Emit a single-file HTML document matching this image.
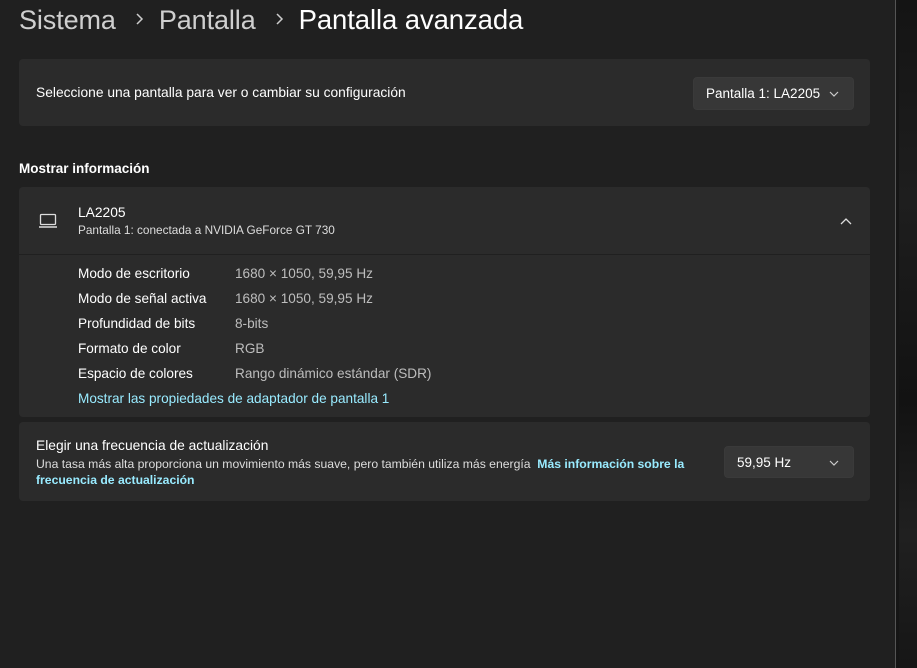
<!DOCTYPE html>
<html><head><meta charset="utf-8"><style>
*{margin:0;padding:0;box-sizing:border-box}
body{width:917px;height:668px;background:#202020;font-family:"Segoe UI","Liberation Sans",sans-serif;color:#fff;position:relative;overflow:hidden}
.side{position:absolute;left:895px;top:0;width:22px;height:668px;background:#151515;border-left:1px solid #555}
.side::after{content:"";position:absolute;left:3px;top:0;width:19px;height:668px;background:linear-gradient(180deg,#141414,#1e1e1e 30%,#121212 60%,#202020 80%,#161616)}
h1{position:absolute;left:19px;top:4px;font-size:27px;font-weight:normal;white-space:nowrap;letter-spacing:-0.1px}
h1 .g{color:#cfcfcf}
h1 .s{display:inline-block;width:10px;margin:0 15px 0 18px;position:relative;top:-3px}
.card{position:absolute;left:19px;width:851px;background:#2b2b2b;border-radius:4px}
.t{font-size:13.8px;color:#fff;position:absolute;white-space:nowrap}
.btn{position:absolute;background:#373737;border-radius:4px;font-size:13.5px;color:#fff;padding-left:12px;line-height:31px;border:1px solid #3a3a3a}
.btn svg{position:absolute;right:14px;top:13px}
.sec{position:absolute;left:19px;top:161px;font-size:13.5px;font-weight:bold}
.row{position:absolute;left:78px;font-size:13.6px;color:#fff;white-space:nowrap}
.row span{position:absolute;left:157px;color:#bdbdbd;white-space:nowrap}
.link{color:#99ebff}
</style></head><body>
<div class="side"></div>
<h1><span class="g">Sistema</span><span class="s"><svg width="10" height="14" viewBox="0 0 10 14"><path d="M3 2l5 5-5 5" fill="none" stroke="#ccc" stroke-width="1.5"/></svg></span><span class="g">Pantalla</span><span class="s"><svg width="10" height="14" viewBox="0 0 10 14"><path d="M3 2l5 5-5 5" fill="none" stroke="#ccc" stroke-width="1.5"/></svg></span><span style="font-size:27.5px">Pantalla avanzada</span></h1>

<div class="card" style="top:59px;height:67px">
  <div class="t" style="left:17px;top:26px">Seleccione una pantalla para ver o cambiar su configuración</div>
  <div class="btn" style="left:674px;top:18px;width:161px;height:33px">Pantalla 1: LA2205<svg width="10" height="6" viewBox="0 0 10 6"><path d="M1 1l4 4 4-4" fill="none" stroke="#ccc" stroke-width="1.2"/></svg></div>
</div>

<div class="sec">Mostrar información</div>

<div class="card" style="top:187px;height:67px;border-radius:4px 4px 0 0">
  <svg style="position:absolute;left:19px;top:26px" width="20" height="16" viewBox="0 0 20 16"><rect x="2.5" y="1.5" width="15" height="10" rx="1" fill="none" stroke="#ddd" stroke-width="1.3"/><line x1="1" y1="14" x2="19" y2="14" stroke="#ddd" stroke-width="1.5"/></svg>
  <div class="t" style="left:59px;top:18px">LA2205</div>
  <div class="t" style="left:59px;top:36px;font-size:11.8px;color:#ddd">Pantalla 1: conectada a NVIDIA GeForce GT 730</div>
  <svg style="position:absolute;left:821px;top:30px" width="12" height="8" viewBox="0 0 12 8"><path d="M1 7l5-5 5 5" fill="none" stroke="#ddd" stroke-width="1.3"/></svg>
</div>
<div class="card" style="top:255px;height:162px;border-radius:0 0 4px 4px"></div>
<div class="row" style="top:266px">Modo de escritorio<span>1680 × 1050, 59,95 Hz</span></div>
<div class="row" style="top:291px">Modo de señal activa<span>1680 × 1050, 59,95 Hz</span></div>
<div class="row" style="top:316px">Profundidad de bits<span>8-bits</span></div>
<div class="row" style="top:341px">Formato de color<span>RGB</span></div>
<div class="row" style="top:366px">Espacio de colores<span>Rango dinámico estándar (SDR)</span></div>
<div class="row link" style="top:391px">Mostrar las propiedades de adaptador de pantalla 1</div>

<div class="card" style="top:422px;height:79px">
  <div class="t" style="left:17px;top:16px">Elegir una frecuencia de actualización</div>
  <div class="t" style="left:17px;top:34px;font-size:12.2px;color:#ddd;width:660px;line-height:16px;white-space:normal">Una tasa más alta proporciona un movimiento más suave, pero también utiliza más energía &nbsp;<b class="link" style="font-weight:600">Más información sobre la frecuencia de actualización</b></div>
  <div class="btn" style="left:705px;top:24px;width:130px;height:32px">59,95 Hz<svg width="10" height="6" viewBox="0 0 10 6"><path d="M1 1l4 4 4-4" fill="none" stroke="#ccc" stroke-width="1.2"/></svg></div>
</div>
</body></html>
